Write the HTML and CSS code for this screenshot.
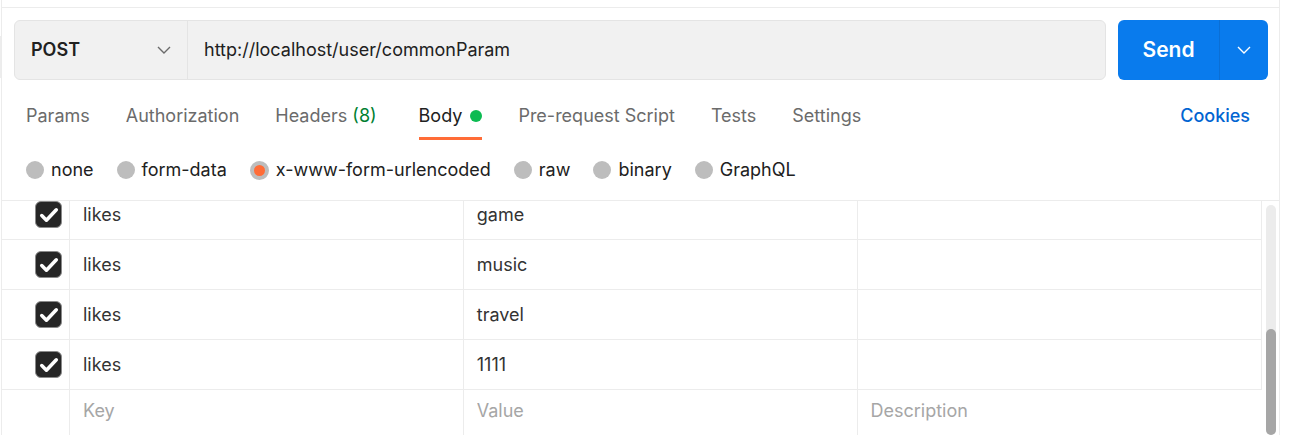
FILE: index.html
```html
<!DOCTYPE html>
<html lang="en">
<head>
<meta charset="utf-8">
<title>POST http://localhost/user/commonParam</title>
<link rel="stylesheet" href="styles.css">
</head>
<body>
<aside class="edge"></aside>
<main class="panel">
  <form class="request">
    <div class="address">
      <div class="method">
        <select class="method-select" aria-label="Request method"><option>POST</option></select>
        <svg class="chevron" viewBox="0 0 14 8" aria-hidden="true"><path d="M1 1l6 6 6-6"/></svg>
      </div>
      <input class="url" type="text" aria-label="Request URL" value="http://localhost/user/commonParam">
    </div>
    <div class="send-group">
      <button class="send" type="button">Send</button>
      <button class="send-more" type="button" aria-label="More send options"><svg class="chevron" viewBox="0 0 14 8" aria-hidden="true"><path d="M1 1l6 6 6-6"/></svg></button>
    </div>
  </form>

  <nav class="tabs">
    <a class="tab" href="#params">Params</a>
    <a class="tab" href="#authorization">Authorization</a>
    <a class="tab tab-headers" href="#headers">Headers <span class="count">(8)</span></a>
    <a class="tab active" href="#body">Body<span class="dot"></span></a>
    <a class="tab" href="#prerequest">Pre-request Script</a>
    <a class="tab" href="#tests">Tests</a>
    <a class="tab" href="#settings">Settings</a>
    <a class="cookies" href="#cookies">Cookies</a>
  </nav>

  <div class="modes" role="radiogroup" aria-label="Body type">
    <label class="mode"><input class="radio" type="radio" name="mode">none</label>
    <label class="mode"><input class="radio" type="radio" name="mode">form-data</label>
    <label class="mode"><input class="radio" type="radio" name="mode" checked>x-www-form-urlencoded</label>
    <label class="mode"><input class="radio" type="radio" name="mode">raw</label>
    <label class="mode"><input class="radio" type="radio" name="mode">binary</label>
    <label class="mode"><input class="radio" type="radio" name="mode">GraphQL</label>
  </div>

  <section class="editor">
    <div class="viewport">
      <table class="params">
        <colgroup><col class="col-check"><col class="col-key"><col class="col-value"><col></colgroup>
        <tbody>
          <tr>
            <td class="check-cell"><label class="check"><input class="box" type="checkbox" checked aria-label="Include likes game"><svg class="tick" viewBox="0 0 26 26" aria-hidden="true"><path d="M6.500 14l4.500 4.500L20.500 8.500"/></svg></label></td>
            <td>likes</td><td>game</td><td></td>
          </tr>
          <tr>
            <td class="check-cell"><label class="check"><input class="box" type="checkbox" checked aria-label="Include likes music"><svg class="tick" viewBox="0 0 26 26" aria-hidden="true"><path d="M6.500 14l4.500 4.500L20.500 8.500"/></svg></label></td>
            <td>likes</td><td>music</td><td></td>
          </tr>
          <tr>
            <td class="check-cell"><label class="check"><input class="box" type="checkbox" checked aria-label="Include likes travel"><svg class="tick" viewBox="0 0 26 26" aria-hidden="true"><path d="M6.500 14l4.500 4.500L20.500 8.500"/></svg></label></td>
            <td>likes</td><td>travel</td><td></td>
          </tr>
          <tr>
            <td class="check-cell"><label class="check"><input class="box" type="checkbox" checked aria-label="Include likes 1111"><svg class="tick" viewBox="0 0 26 26" aria-hidden="true"><path d="M6.500 14l4.500 4.500L20.500 8.500"/></svg></label></td>
            <td>likes</td><td>1111</td><td></td>
          </tr>
          <tr class="new-row">
            <td></td>
            <td><input class="field" type="text" placeholder="Key" aria-label="Key"></td>
            <td><input class="field" type="text" placeholder="Value" aria-label="Value"></td>
            <td><input class="field" type="text" placeholder="Description" aria-label="Description"></td>
          </tr>
        </tbody>
      </table>
    </div>
    <div class="scrollbar"><div class="thumb"></div></div>
  </section>
</main>
</body>
</html>
```

FILE: styles.css
```css
* {
  box-sizing: border-box;
}

body {
  margin: 0;
  height: 100vh;
  display: flex;
  overflow: hidden;
  background: #fff;
  color: #212121;
  font: 18px/24px Inter, "Liberation Sans", sans-serif;
}

input,
select,
button {
  font: inherit;
  color: inherit;
  margin: 0;
}

.edge {
  flex: none;
  width: 1px;
  height: 42px;
  margin-top: 36px;
  background: #ededed;
}

.panel {
  flex: 1;
  min-width: 0;
  display: flex;
  flex-direction: column;
  margin-right: 11px;
  padding-top: 7px;
  border: solid #ececec;
  border-width: 0 1px;
}

.chevron {
  width: 14px;
  height: 8px;
  fill: none;
  stroke: currentColor;
  stroke-width: 1.4;
}

.request {
  display: flex;
  gap: 12px;
  padding: 12px 11px 0 12px;
  border-top: 1px solid #ececec;
}

.address {
  flex: 1;
  display: flex;
  height: 60px;
  border: 1px solid #e4e4e4;
  border-radius: 6px;
  background: #f1f1f1;
  overflow: hidden;
}

.method {
  flex: none;
  width: 173px;
  display: grid;
  align-items: center;
  border-right: 1px solid #e4e4e4;
}

.method > * {
  grid-area: 1 / 1;
}

.method .chevron {
  justify-self: end;
  margin-right: 16px;
  color: #6b6b6b;
  pointer-events: none;
}

.method-select {
  appearance: none;
  height: 100%;
  padding: 0 16px;
  border: 0;
  background: none;
  font-weight: 600;
}

.url {
  flex: 1;
  min-width: 0;
  padding: 0 16px;
  border: 0;
  background: none;
}

.send-group {
  flex: none;
  display: flex;
  border-radius: 6px;
  overflow: hidden;
  background: #097bed;
  color: #fff;
}

.send {
  width: 101px;
  padding: 0;
  border: 0;
  background: none;
  font-size: 21px;
  font-weight: 600;
}

.send-more {
  width: 49px;
  display: grid;
  place-items: center;
  padding: 0;
  border: 0;
  border-left: 1px solid #0a6fd6;
  background: none;
}

.tabs {
  display: flex;
  gap: 36px;
  margin-top: 24px;
  padding: 0 29px 0 24px;
}

.tab,
.cookies {
  color: #6b6b6b;
  text-decoration: none;
  white-space: nowrap;
}

.tab {
  height: 36px;
  border-bottom: 3px solid transparent;
}

.tab-headers {
  padding-right: 6px;
}

.count {
  color: #007f31;
}

.active {
  display: flex;
  align-items: center;
  gap: 8px;
  padding-bottom: 9px;
  color: #212121;
  border-color: #ff6c37;
}

.dot {
  width: 12px;
  height: 12px;
  border-radius: 50%;
  background: #0cbb52;
}

.cookies {
  margin-left: auto;
  color: #0265d2;
  font-weight: 500;
}

.modes {
  display: flex;
  gap: 23px;
  padding: 18px 24px;
}

.mode {
  display: flex;
  align-items: center;
  gap: 7px;
  white-space: nowrap;
}

.radio {
  appearance: none;
  width: 18px;
  height: 18px;
  border-radius: 50%;
  background: #bdbdbd;
}

.radio:checked {
  width: 19px;
  height: 19px;
  border: 4px solid #bdbdbd;
  background: #ff6c37;
}

.editor {
  flex: 1;
  min-height: 0;
  display: flex;
  gap: 4px;
  padding-right: 3px;
  border-top: 1px solid #ececec;
}

.viewport {
  flex: 1;
  min-width: 0;
  overflow: hidden;
}

.params {
  width: 100%;
  margin-top: -11px;
  table-layout: fixed;
  border-collapse: separate;
  border-spacing: 0;
  color: #333;
}

.col-check {
  width: 68px;
}

.col-key,
.col-value {
  width: 31.25%;
}

.params td {
  height: 50px;
  padding: 0 13px;
  border: solid #ececec;
  border-width: 0 1px 1px 0;
}

.params .check-cell {
  padding: 0 7px 0 33px;
}

.params .new-row td {
  height: 46px;
  padding-bottom: 4px;
  border-bottom: 0;
}

.new-row td:last-child {
  border-right: 0;
}

.check {
  display: grid;
  width: 27px;
  height: 27px;
}

.check > * {
  grid-area: 1 / 1;
}

.box {
  appearance: none;
  width: 27px;
  height: 27px;
  border: 1px solid #8a8a8a;
  border-radius: 6px;
  background: #262626;
}

.tick {
  width: 27px;
  height: 27px;
  fill: none;
  stroke: #fff;
  stroke-width: 3.4;
  stroke-linecap: round;
  stroke-linejoin: round;
  pointer-events: none;
}

.field {
  display: block;
  width: 100%;
  padding: 0;
  border: 0;
  background: none;
}

.field::placeholder {
  color: #a6a6a6;
  opacity: 1;
}

.scrollbar {
  flex: none;
  width: 10px;
  display: flex;
  align-items: flex-end;
  margin-top: 4px;
  border-radius: 5px;
  background: #ececec;
}

.thumb {
  width: 100%;
  height: 46%;
  border-radius: 5px;
  background: #a6a6a6;
}
```
